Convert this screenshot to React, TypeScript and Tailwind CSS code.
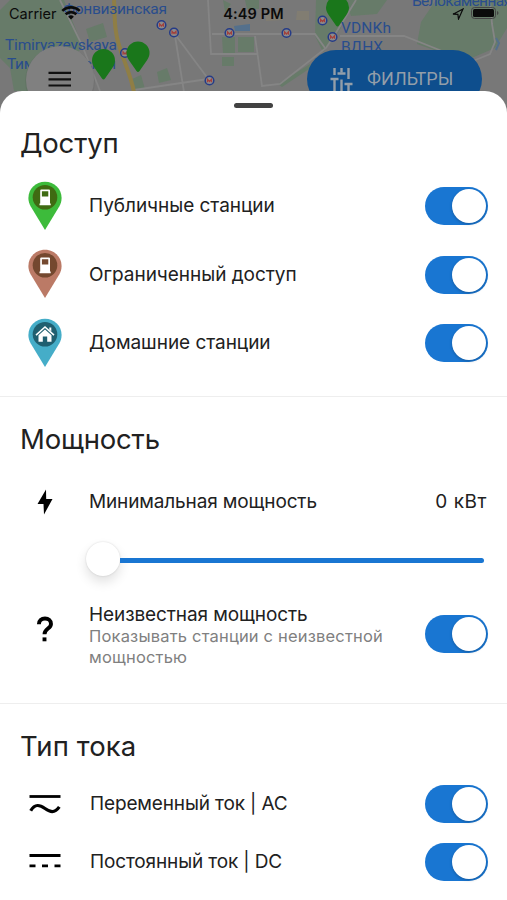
import { useState } from 'react';
import type { ReactNode } from 'react';

const accessRows = [
  { title: 'Публичные станции', fill: '#3dbb3b', inner: '#3f6b12', glyph: 'pump' },
  { title: 'Ограниченный доступ', fill: '#bb7a66', inner: '#74482f', glyph: 'pump' },
  { title: 'Домашние станции', fill: '#45adc8', inner: '#1f5f70', glyph: 'home' },
];

const metroStops = [
  [161.5, 25],
  [174, 32.5],
  [125, 53],
  [209.5, 80.5],
  [229.5, 33],
  [286.5, 33],
  [322.5, 20.5],
  [332.5, 37],
];

function StationPin({ fill, inner, glyph }: { fill: string; inner: string; glyph: string }) {
  return (
    <svg className="-mt-px" width="36" height="50" viewBox="0 0 36 50">
      <path
        d="M18 .8C8.700 .8 1.400 8 1.400 17c0 3.200.8 5.700 2.200 8.200L18 49l14.400-23.800c1.400-2.500 2.200-5 2.200-8.200C34.600 8 27.300.8 18 .8z"
        fill={fill}
      />
      <circle cx="18" cy="16.300" r="12.300" fill={inner} />
      {glyph === 'pump' ? (
        <path
          d="M13.200 9.400q0-1 1-1h7.800q1 0 1 1v13h.7v1.800H12.500v-1.800h.7zM14.900 10.200v5.300h6.400v-5.300z"
          fill="#fff"
          fillRule="evenodd"
        />
      ) : (
        <>
          <path d="M9 17.200 18 9l9 8.200" fill="none" stroke="#fff" strokeWidth="1.600" />
          <path d="M11.500 17.300 18 11.400l6.500 5.900v6.500h-4.300v-5.300h-4.400v5.300h-4.300z" fill="#fff" />
          <path d="M22.300 9.500h2v4l-2-1.800z" fill="#fff" />
        </>
      )}
    </svg>
  );
}

function MapPin({ x, y }: { x: number; y: number }) {
  return (
    <path
      transform={`translate(${x} ${y})`}
      d="M0-11.500A11.500 11.500 0 0 0-11.500 0c0 3 1 4.900 2.500 7.200L-1.500 18q1.500 2 3 0L9 7.200C10.500 4.900 11.500 3 11.500 0A11.500 11.500 0 0 0 0-11.500z"
      fill="#1a771b"
    />
  );
}

function MapBackdrop() {
  return (
    <svg className="block" width="507" height="120" viewBox="0 0 507 120">
      <rect width="507" height="120" fill="#787878" />
      <g fill="#677b69">
        <path d="M10 0h54l8 20 11 27-20 20 4 24H14L10 68 0 58V10z" />
        <path d="M86 29l17-6 4 14-17 5z" />
        <path d="M157 72l10-4 4 12-12 3z" />
        <path d="M130 80l11-5 4 14h-12z" />
        <path d="M222 37h13v16h-12zM238 37h16v15h-16zM222 57h12v9h-12zM223 0l8 4-6 8zM245 0h14v9h-12z" />
        <path d="M316 0h31l-6 28-10 14-8 10-8-16z" />
        <path d="M345 0h42l-10 14-26 2z" />
        <path d="M436 0h71v28l-12 20-28 12-22-6-28-10 4-22z" />
        <path d="M278 84l32-20 2 3-30 20z" />
      </g>
      <path d="M266 13l14-2 3 9-17 1zM297 11h12v9h-13z" fill="#817d72" />
      <g fill="none" stroke="#858585" strokeWidth="1.800">
        <path d="M60 0l22 45 18 46M174 33l35 47M175 36l9 56M134 90l74-11M208 0l3 54h46M212 34h103l10 14" />
        <path d="M255 36l7 50 18-2 46-36 8-12 22-36M340 36h64l38 15M490 0l2 24 3 18-5 12-22 9" />
      </g>
      <path d="M114 0c1 12 0 20 2 32 2 18 14 38 18 60" fill="none" stroke="#8f7e45" strokeWidth="4" />
      <path d="M234 26l16-2v7h-15z" fill="#54708c" />
      <path d="M496 38l3 5-3 7" fill="none" stroke="#54708c" strokeWidth="2" />
      <g fontFamily="Roboto, sans-serif" fontSize="15.500" fill="#294d8d">
        <text x="63" y="13.500" textLength="104">Фонвизинская</text>
        <text x="5" y="50" textLength="112">Timiryazevskaya</text>
        <text x="7" y="68.500" textLength="109">Тимирязевская</text>
        <text x="341" y="33" textLength="50">VDNKh</text>
        <text x="341" y="51.500" textLength="42">ВДНХ</text>
        <text x="412" y="6" textLength="100">Белокаменная</text>
      </g>
      {metroStops.map(([x, y]) => (
        <g key={`${x}-${y}`}>
          <circle cx={x} cy={y} r="4.300" fill="#8c8c8c" stroke="#253b87" strokeWidth="1.500" />
          <path d={`M${x - 2} ${y + 1.800}v-3l2 2.200 2-2.200v3`} fill="none" stroke="#a3403b" strokeWidth="1.200" />
        </g>
      ))}
      <circle cx="60" cy="81" r="35" fill="#000" opacity=".05" />
      <circle cx="60" cy="80" r="34" fill="#808080" />
      <path d="M48.500 72.800h22.500M48.500 79.300h22.500M48.500 85.500h22.500" stroke="#111" strokeWidth="2.200" />
      <MapPin x={103.500} y={60.500} />
      <MapPin x={138} y={53} />
      <MapPin x={337.500} y={7.500} />
    </svg>
  );
}

function StatusBar() {
  return (
    <div className="absolute inset-x-0 top-0 flex h-7 items-center justify-between px-[9px] text-[#0b0b0b]">
      <div className="flex w-40 items-center gap-1">
        <span className="text-[14.500px] leading-7">Carrier</span>
        <svg className="-mt-0.5" width="20" height="14" viewBox="0 0 20 14">
          <g fill="none" stroke="currentColor" strokeWidth="2.600">
            <path d="M1.300 4.900a12.500 12.500 0 0 1 17.400 0" />
            <path d="M4.600 8.300a7.700 7.700 0 0 1 10.800 0" />
          </g>
          <path d="M10 13.600 7.100 10.700a4.100 4.100 0 0 1 5.800 0z" fill="currentColor" />
        </svg>
      </div>
      <span className="text-[14.500px] font-semibold leading-7 tracking-[0.1px]">4:49 PM</span>
      <div className="flex w-40 items-center justify-end gap-[7px]">
        <svg className="-mt-px" width="12" height="12" viewBox="0 0 12 12">
          <path d="M1 6.200 11 1 6.500 11 5.900 6.300z" fill="none" stroke="currentColor" strokeWidth="1.200" />
        </svg>
        <svg className="-mt-0.5 -mr-px" width="28" height="12" viewBox="0 0 28 12">
          <rect x=".5" y=".5" width="24" height="11" rx="3" fill="none" stroke="#444" />
          <rect x="2" y="2" width="21" height="8" rx="1.500" fill="currentColor" />
          <path d="M26 4v4q1.500-.6 1.500-2T26 4z" fill="#444" />
        </svg>
      </div>
    </div>
  );
}

function FilterButton() {
  return (
    <div className="absolute left-[307px] top-[50px] flex h-[58px] w-[175px] items-center gap-[14px] rounded-full bg-[#0e4e8d] pl-[23px] text-[#939ea9]">
      <svg width="23" height="23" viewBox="0 0 23 23" fill="none" stroke="currentColor" strokeWidth="2.400">
        <path d="M4.500 0v7M4.500 11.500V23M11.500 0v4.500M11.500 11.500V23M18.500 0v11M18.500 16v7" />
        <path d="M.5 11h8M7.500 5.500h8M14.500 16h8" />
      </svg>
      <span className="font-[Roboto,sans-serif] text-[18px] leading-6">ФИЛЬТРЫ</span>
    </div>
  );
}

function Toggle({ label }: { label: string }) {
  const [on, setOn] = useState(true);
  return (
    <button
      role="switch"
      aria-checked={on}
      aria-label={label}
      onClick={() => setOn(!on)}
      className={`flex h-[38px] w-[63px] shrink-0 items-center rounded-full px-0.5 ${
        on ? 'justify-end bg-[#1976d2]' : 'justify-start bg-gray-300'
      }`}
    >
      <span className="size-[34px] rounded-full bg-white shadow-[0_1px_3px_rgba(0,0,0,0.25)]" />
    </button>
  );
}

function Row({ icon, children, className }: { icon: ReactNode; children: ReactNode; className: string }) {
  return (
    <div className={`flex items-center pl-[21px] pr-[19px] ${className}`}>
      <div className="flex w-12 shrink-0 justify-center">{icon}</div>
      <div className="flex flex-1 items-center justify-between pl-5 text-[19px] leading-6">{children}</div>
    </div>
  );
}

function Heading({ children }: { children: ReactNode }) {
  return <h2 className="pl-5 text-[27.500px] leading-9 tracking-[-0.2px]">{children}</h2>;
}

export default function App() {
  return (
    <div className="h-[900px] w-[507px] overflow-hidden bg-white font-[Inter,sans-serif] text-[#212121]">
      <header className="relative h-[91px]">
        <MapBackdrop />
        <FilterButton />
        <StatusBar />
      </header>

      <main className="relative h-[809px] rounded-t-[22px] bg-white pt-3">
        <div className="mx-auto h-[5px] w-[39px] rounded-full bg-[#424242]" />

        <section className="border-b border-[#eeeeee] pb-[18.500px] pt-[17px]">
          <Heading>Доступ</Heading>
          <div className="pt-[11px]">
            {accessRows.map((row) => (
              <Row key={row.title} className="h-[68.500px]" icon={<StationPin {...row} />}>
                <span className="tracking-[-0.040px]">{row.title}</span>
                <Toggle label={row.title} />
              </Row>
            ))}
          </div>
        </section>

        <section className="h-[307px] border-b border-[#eeeeee] pt-6">
          <Heading>Мощность</Heading>
          <Row
            className="mt-5 h-[49px]"
            icon={
              <svg width="16" height="26" viewBox="0 0 16 26">
                <path d="M9 .5.500 15h6L7 25.500 15.500 10H9.200z" />
              </svg>
            }
          >
            <span className="tracking-[-0.140px]">Минимальная мощность</span>
            <span className="pr-px tracking-[0.550px]">0 кВт</span>
          </Row>
          <div className="ml-[86px] mr-[23px] mt-[16px] flex h-9 items-center">
            <div className="-mt-0.5 size-[34px] rounded-full bg-white shadow-[0_0_2px_rgba(0,0,0,0.15),0_6px_12px_rgba(0,0,0,0.12)]" />
            <div className="h-[5px] flex-1 rounded-r-full bg-[#1976d2]" />
          </div>
          <Row
            className="mt-[23px] h-[66px]"
            icon={
              <svg className="-mt-2.5" width="18" height="26" viewBox="0 0 18 26" fill="none" stroke="#000" strokeWidth="3.900">
                <path d="M2.900 8.300C2.900 4.500 5.500 2.500 9 2.500s6 2.200 6 5.400c0 4.700-6.500 4.700-6.500 10.300" />
                <path d="M8.500 21.400v3.900" />
              </svg>
            }
          >
            <div className="pt-px">
              <div className="relative top-px tracking-[-0.100px]">Неизвестная мощность</div>
              <div className="w-[310px] whitespace-nowrap text-[16.500px] leading-[21px] tracking-[0.180px] text-[#808080]">
                Показывать станции с неизвестной
                <br />
                мощностью
              </div>
            </div>
            <Toggle label="Неизвестная мощность" />
          </Row>
        </section>

        <section className="pt-6">
          <h2 className="pl-5 text-[27.500px] leading-9 tracking-[0.1px]">Тип тока</h2>
          <Row
            className="mt-[11px] h-[58px]"
            icon={
              <svg className="-mt-px" width="32" height="20" viewBox="0 0 32 20" fill="none" stroke="#000" strokeWidth="2.800">
                <path d="M.5 2.500h31" />
                <path d="M1.700 16.800C6 9.300 11 11 16 14.500s9.500 5.200 14.300-1.700" strokeWidth="3.200" />
              </svg>
            }
          >
            <span className="pl-px tracking-[-0.140px]">Переменный ток | AC</span>
            <Toggle label="AC" />
          </Row>
          <Row
            className="h-[58px]"
            icon={
              <svg className="-mt-0.5" width="32" height="16" viewBox="0 0 32 16" fill="none" stroke="#000" strokeWidth="2.800">
                <path d="M.5 2.500h31M.5 12.800h6M13 12.800h6M25.500 12.800h6" />
              </svg>
            }
          >
            <span className="pl-px tracking-[-0.140px]">Постоянный ток | DC</span>
            <Toggle label="DC" />
          </Row>
        </section>
      </main>
    </div>
  );
}
